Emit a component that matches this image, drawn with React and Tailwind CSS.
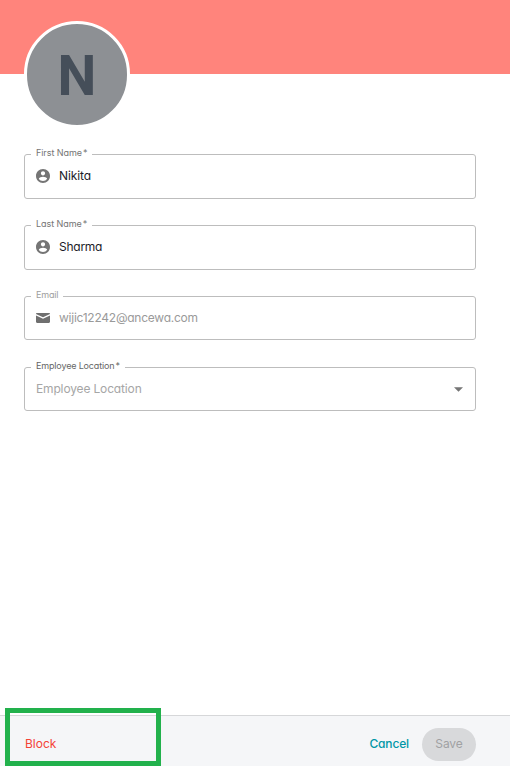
function PersonIcon() {
  return (
    <svg viewBox="2 2 20 20" className="-mt-[1px] h-[14px] w-[14px] shrink-0" fill="#757575">
      <path d="M12 2C6.48 2 2 6.48 2 12s4.48 10 10 10 10-4.48 10-10S17.52 2 12 2zm0 3.2c1.7 0 3 1.3 3 3s-1.3 3-3 3-3-1.3-3-3 1.3-3 3-3zm0 14.1c-2.5 0-4.71-1.28-6-3.22.03-1.99 4-3.08 6-3.08s5.97 1.09 6 3.08a7.2 7.2 0 0 1-6 3.22z" />
    </svg>
  );
}

function MailIcon() {
  return (
    <svg viewBox="0 0 14 10" className="h-[10px] w-[14px] shrink-0" fill="#6f6f6f">
      <path d="M1.2 0h11.6C13.5 0 14 .4 14 1L7 4.2 0 1c0-.6.5-1 1.2-1z" />
      <path d="M0 2.4l7 3.4 7-3.4v6.4c0 .7-.5 1.2-1.2 1.2H1.2C.5 10 0 9.5 0 8.8z" />
    </svg>
  );
}

function Field({ label, required, labelClass, className, icon, children }) {
  return (
    <div className={`relative flex items-center rounded-[3px] border border-[#bdbdbd] px-[11px] ${className}`}>
      <span className={`absolute -top-[9px] left-[6px] bg-white pr-[5px] pl-[5px] text-[9px] leading-[13px] whitespace-nowrap ${labelClass}`}>
        {label}
        {required && <span className="ml-[1px]">*</span>}
      </span>
      {icon && <span className="mr-[9px] flex w-[14px] justify-center">{icon}</span>}
      {children}
    </div>
  );
}

export default function App() {
  return (
    <div className="relative flex h-[766px] w-[510px] flex-col overflow-hidden bg-white font-['Inter',sans-serif] text-[12px] leading-4 [font-feature-settings:'cv11']">
      <header className="h-[74px] shrink-0 bg-[#ff847c] pt-[21px] pl-6">
        <div className="flex h-[107px] w-[106px] items-center justify-center rounded-full border-3 border-white bg-[#8d9094] pt-[2px] font-['Roboto',sans-serif] text-[55px] font-bold text-[#454e59]">
          N
        </div>
      </header>

      <main className="flex flex-1 flex-col pt-20 pr-[34px] pl-6">
        <Field label="First Name" required labelClass="text-[#757575] tracking-[-0.06px]" className="mb-[26px] h-[45px]" icon={<PersonIcon />}>
          <span className="-mt-[2px] tracking-[-0.1px] text-[#1c1c28]">Nikita</span>
        </Field>
        <Field label="Last Name" required labelClass="text-[#757575] tracking-[-0.06px]" className="mb-[26px] h-[45px]" icon={<PersonIcon />}>
          <span className="-mt-[2px] tracking-[-0.25px] text-[#1c1c28]">Sharma</span>
        </Field>
        <Field label="Email" labelClass="text-[#9e9e9e] tracking-[-0.2px]" className="mb-[27px] h-[44px]" icon={<MailIcon />}>
          <span className="-mt-[1px] tracking-[-0.25px] text-[#9a9a9a]">wijic12242@ancewa.com</span>
        </Field>
        <Field label="Employee Location" required labelClass="text-[#666666] tracking-[-0.16px]" className="h-[44px]">
          <span className="-mt-[1px] flex-1 tracking-[-0.15px] text-[#a6a6a6]">Employee Location</span>
          <svg viewBox="0 0 10 5" className="mr-[1px] h-[5px] w-[9px]" fill="#757575">
            <path d="M0 0h10L5 5z" />
          </svg>
        </Field>
      </main>

      <footer className="flex h-[51px] shrink-0 items-start border-t border-[#d6d7d9] bg-[#f5f6f8] pt-3 pr-[34px] pl-[25px]">
        <button className="mr-auto h-[33px] pb-[2px] text-[#f44336]">Block</button>
        <button className="mr-[13px] h-[33px] pb-[2px] font-medium tracking-[-0.15px] text-[#0097a7]">Cancel</button>
        <button className="h-[33px] w-[54px] rounded-full bg-[#d8d9db] pb-[2px] tracking-[-0.1px] text-[#a0a1a3] [font-feature-settings:normal]">Save</button>
      </footer>

      {/* highlight around the block action */}
      <div className="pointer-events-none absolute top-[708px] left-[5px] h-[58px] w-[156px] border-5 border-[#22b14c]" />
    </div>
  );
}
